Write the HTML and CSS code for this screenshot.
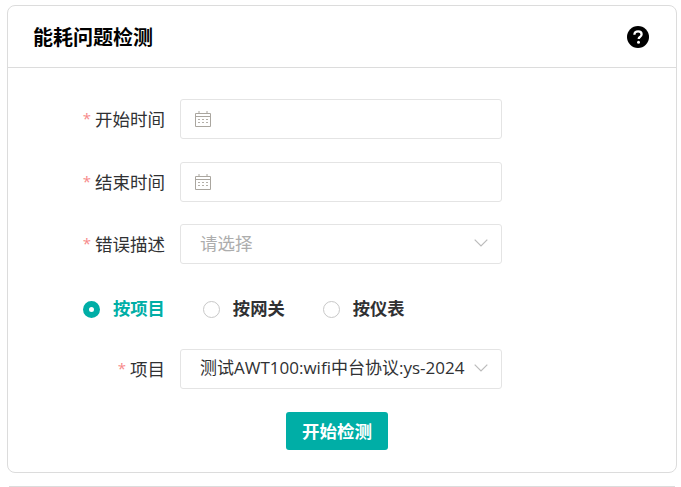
FILE: index.html
```html
<!DOCTYPE html>
<html lang="zh-CN">
<head>
<meta charset="utf-8">
<title>能耗问题检测</title>
<link rel="stylesheet" href="styles.css">
</head>
<body>
<section class="card">
  <header class="card-head">
    <h1 class="title">能耗问题检测</h1>
    <svg class="help" width="22" height="22" viewBox="0 0 22 22" aria-hidden="true">
      <circle cx="11" cy="11" r="11" fill="#000"/>
      <path d="M7.400 8.700c0-2.100 1.500-3.400 3.700-3.400s3.500 1.200 3.500 3c0 1.500-.8 2.200-1.700 2.800-.8.500-1.200.9-1.200 1.900" fill="none" stroke="#fff" stroke-width="2.300"/>
      <circle cx="11.500" cy="16.300" r="1.500" fill="#fff"/>
    </svg>
  </header>
  <form class="form">
    <div class="row row-a">
      <label class="label"><span class="req">*</span>开始时间</label>
      <div class="field">
        <svg class="cal" width="16" height="16" viewBox="0 0 16 16" aria-hidden="true">
          <path d="M.5 2.500h15v13H.5zM.5 5.500h15" fill="none" stroke="#aaa69f"/>
          <path d="M4 0v3M12 0v3" stroke="#aaa69f" fill="none"/>
          <path d="M3 8h2v1H3zM7 8h2v1H7zM11 8h2v1h-2zM3 11h2v1H3zM7 11h2v1H7zM11 11h2v1h-2z" fill="#b4b0a9"/>
        </svg>
      </div>
    </div>
    <div class="row row-b">
      <label class="label"><span class="req">*</span>结束时间</label>
      <div class="field">
        <svg class="cal" width="16" height="16" viewBox="0 0 16 16" aria-hidden="true">
          <path d="M.5 2.500h15v13H.5zM.5 5.500h15" fill="none" stroke="#aaa69f"/>
          <path d="M4 0v3M12 0v3" stroke="#aaa69f" fill="none"/>
          <path d="M3 8h2v1H3zM7 8h2v1H7zM11 8h2v1h-2zM3 11h2v1H3zM7 11h2v1H7zM11 11h2v1h-2z" fill="#b4b0a9"/>
        </svg>
      </div>
    </div>
    <div class="row row-c">
      <label class="label"><span class="req">*</span>错误描述</label>
      <div class="field select">
        <span class="placeholder">请选择</span>
        <svg class="chev" width="14" height="8" viewBox="0 0 14 8" aria-hidden="true"><path d="M.7.7 7 7l6.300-6.300" fill="none" stroke="#bbb" stroke-width="1.200"/></svg>
      </div>
    </div>
    <div class="radios">
      <span class="radio active"><i class="dot"></i><span class="radio-text">按项目</span></span>
      <span class="radio"><i class="dot"></i><span class="radio-text">按网关</span></span>
      <span class="radio"><i class="dot"></i><span class="radio-text">按仪表</span></span>
    </div>
    <div class="row">
      <label class="label"><span class="req">*</span>项目</label>
      <div class="field select">
        <span class="value">测试AWT100:wifi中台协议:ys-2024</span>
        <svg class="chev" width="14" height="8" viewBox="0 0 14 8" aria-hidden="true"><path d="M.7.7 7 7l6.300-6.300" fill="none" stroke="#bbb" stroke-width="1.200"/></svg>
      </div>
    </div>
    <div class="actions"><button class="btn" type="button">开始检测</button></div>
  </form>
</section>
<div class="next-card"></div>
</body>
</html>
```
FILE: styles.css
```css
* { box-sizing: border-box; }
html, body { height: 100%; overflow: hidden; }
body {
  margin: 0;
  padding: 5px 4px 0 7px;
  background: #fff;
  color: #303133;
  font-family: "Noto Sans CJK SC", sans-serif;
  font-size: 17px;
}
.card {
  width: 670px;
  height: 468px;
  border: 1px solid #dcdcdc;
  border-radius: 8px;
}
.card-head {
  height: 62px;
  border-bottom: 1px solid #dcdcdc;
  padding: 0 27px 0 25px;
  display: flex;
  align-items: center;
  justify-content: space-between;
}
.title {
  margin: 0;
  color: #000;
  font-size: 20px;
  font-weight: 700;
  line-height: 26px;
}
.help { display: block; }
.form { padding-top: 31px; }
.row {
  display: flex;
  align-items: center;
  height: 40px;
}
.row-a { margin-bottom: 23px; }
.row-b { margin-bottom: 22px; }
.label {
  width: 157px;
  text-align: right;
  font-size: 17.500px;
  line-height: 24px;
  margin-right: 15px;
  padding-bottom: 2px;
}
.req {
  color: #f78989;
  margin-right: 4px;
  font-family: "Open Sans", sans-serif;
  font-size: 15px;
  vertical-align: 2px;
}
.field {
  width: 322px;
  height: 40px;
  border: 1px solid #e4e4e4;
  border-radius: 3px;
  display: flex;
  align-items: center;
  padding-left: 14px;
}
.cal { display: block; }
.select { padding: 0 13px 0 19px; justify-content: space-between; }
.placeholder { color: #adadad; font-size: 17.500px; line-height: 24px; padding-bottom: 2px; }
.value {
  font-family: "Open Sans", "Noto Sans CJK SC", sans-serif;
  font-size: 17px;
  line-height: 24px;
  padding-bottom: 2px;
  white-space: nowrap;
}
.chev { display: block; flex: none; margin-bottom: 2px; }
.radios {
  display: flex;
  align-items: center;
  height: 40px;
  margin-top: 25px;
  margin-bottom: 20px;
  padding-left: 75px;
  font-weight: 700;
  font-size: 17.300px;
}
.radio { display: flex; align-items: center; margin-right: 38px; }
.radio-text { line-height: 24px; padding-bottom: 3px; }
.dot {
  width: 17px;
  height: 17px;
  border: 1px solid #c8c8c8;
  border-radius: 50%;
  margin-right: 13px;
}
.active { color: #00aea6; }
.active .dot { border: 6px solid #00aea6; background: #fff; }
.actions { display: flex; padding-left: 278px; margin-top: 23px; }
.btn {
  width: 102px;
  height: 38px;
  padding: 0 0 2px;
  background: #00aea6;
  color: #fff;
  border: 0;
  border-radius: 3px;
  font-family: inherit;
  font-size: 17.500px;
  font-weight: 700;
}
.next-card {
  width: 666px;
  height: 1px;
  margin: 13px 0 0 2px;
  background: #dcdcdc;
}
```
